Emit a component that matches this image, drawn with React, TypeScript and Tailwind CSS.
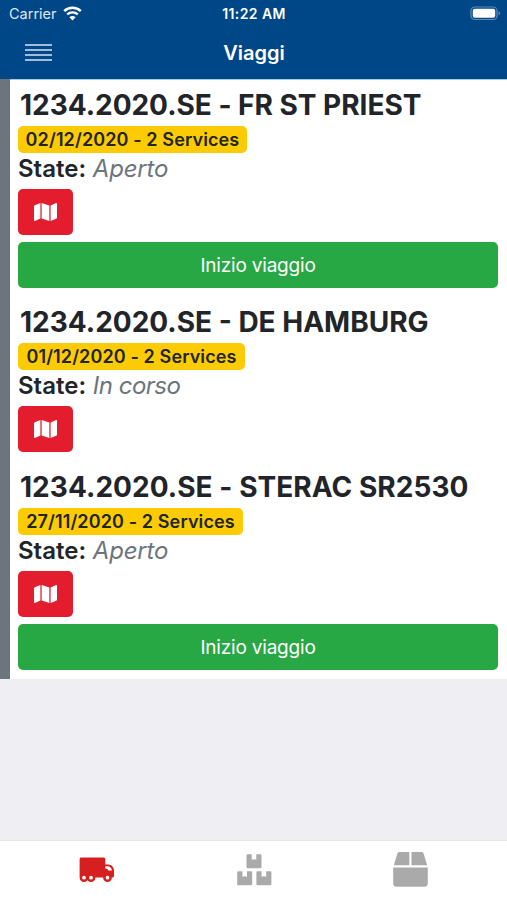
import React from "react";

type Trip = {
  title: string;
  titleSpacing: string;
  badge: string;
  badgeWidth: string;
  state: string;
  stateSpacing: string;
  canStart: boolean;
};

const trips: Trip[] = [
  { title: "1234.2020.SE - FR ST PRIEST", titleSpacing: "tracking-[-0.020px]", badge: "02/12/2020 - 2 Services", badgeWidth: "w-[229px]", state: "Aperto", stateSpacing: "tracking-[-0.200px]", canStart: true },
  { title: "1234.2020.SE - DE HAMBURG", titleSpacing: "tracking-[0px]", badge: "01/12/2020 - 2 Services", badgeWidth: "w-[227px]", state: "In corso", stateSpacing: "tracking-[-0.500px]", canStart: false },
  { title: "1234.2020.SE - STERAC SR2530", titleSpacing: "tracking-[0.050px]", badge: "27/11/2020 - 2 Services", badgeWidth: "w-[225px]", state: "Aperto", stateSpacing: "tracking-[-0.200px]", canStart: true },
];

function WifiIcon() {
  return (
    <svg width="19" height="15" viewBox="0 0 19 15" fill="none" stroke="#fff">
      <path d="M1.2 5.1a12 12 0 0 1 16.6 0" strokeWidth="2.5" />
      <path d="M4.2 8.4a7.7 7.7 0 0 1 10.6 0" strokeWidth="2.3" />
      <path d="M9.5 14.4 6.4 11.2a4.4 4.4 0 0 1 6.2 0Z" fill="#fff" stroke="none" />
    </svg>
  );
}

function BatteryIcon() {
  return (
    <svg width="31" height="15" viewBox="0 0 31 15">
      <rect x="1" y="1" width="26" height="12.5" rx="3.8" fill="none" stroke="#5f8ab8" strokeWidth="1.2" />
      <rect x="2.8" y="2.8" width="22.4" height="8.9" rx="2" fill="#fff" />
      <path d="M28.6 5.2c2 .7 2 3.4 0 4.1Z" fill="#5f8ab8" />
    </svg>
  );
}

function MapIcon() {
  return (
    <svg width="23" height="18" viewBox="0 32 576 448" preserveAspectRatio="none" fill="#fff">
      <path d="M0 117.660v346.320c0 11.320 11.430 19.060 21.940 14.860L160 416V32L20.120 87.950A32.006 32.006 0 0 0 0 117.660zM192 416l192 64V96L192 32v384zM554.060 33.160L416 96v384l139.880-55.950A31.996 31.996 0 0 0 576 394.340V48.020c0-11.320-11.430-19.060-21.940-14.860z" />
    </svg>
  );
}

function TruckIcon() {
  return (
    <svg width="36" height="26" viewBox="0 0 36 26">
      <path fill="#d5201f" d="M2.2.5h22.600a1.500 1.500 0 0 1 1.500 1.500v5.500h3.200c3.300 0 5.500 3.100 5.500 6.300v5.300c0 1-.5 1.400-1.400 1.400H1.900c-.9 0-1.300-.5-1.300-1.400V2C.6 1.100 1.200.5 2.200.5Z" />
      <path fill="#fff" d="M26.300 9.200h2.500c2.100 0 3.700 1.700 4.200 4.200h-3.700c-.5-1.400-1.500-1.800-3-1.900Z" />
      <g fill="#fff" stroke="#d5201f" strokeWidth="2.500">
        <circle cx="5" cy="20.700" r="3.100" />
        <circle cx="12" cy="20.700" r="3.100" />
        <circle cx="28.500" cy="20.700" r="3.100" />
      </g>
    </svg>
  );
}

function BoxesIcon() {
  const box = "M1.200 0h4v5.600l2.300-.6 2.300.6V0h4A1.200 1.200 0 0 1 15 1.200v11.600a1.200 1.200 0 0 1-1.200 1.200H1.200A1.200 1.200 0 0 1 0 12.800V1.200A1.200 1.200 0 0 1 1.200 0Z";
  return (
    <svg width="35" height="32" viewBox="0 0 35 32" fill="#aaa">
      <path d={box} transform="translate(9.500 .2)" />
      <path d={box} transform="translate(.2 17.200)" />
      <path d={box} transform="translate(19.400 17.200)" />
    </svg>
  );
}

function BoxIcon() {
  return (
    <svg width="35" height="35" viewBox="0 0 35 35" fill="#aaa">
      <path d="M6.700 0H16.300v13.200H.8L4.300 1.800C4.700.6 5.500 0 6.700 0Z" />
      <path d="M18.500 0h9.800c1.200 0 2 .6 2.400 1.800l3.500 11.400H18.500Z" />
      <path d="M.2 15.400h34.600v16c0 2-1.300 3.300-3.300 3.300h-28c-2 0-3.300-1.300-3.300-3.300Z" />
    </svg>
  );
}

function TripCard({ trip }: { trip: Trip }) {
  return (
    <article className={`flex flex-col items-start pl-2 pr-[9px] pt-[8px] ${trip.canStart ? "h-[217px]" : "h-[165px]"}`}>
      <h2 className={`h-[35px] whitespace-nowrap pl-[2px] text-[28px] font-[650] leading-[36px] text-[#212529] ${trip.titleSpacing}`}>{trip.title}</h2>
      <span className={`mt-1 flex h-[27px] items-center justify-center whitespace-nowrap rounded-[5px] bg-[#fccb04] text-[18px] font-semibold tracking-[0.120px] text-[#212529] ${trip.badgeWidth}`}>
        {trip.badge}
      </span>
      <p className="h-[30px] whitespace-nowrap text-[24px] leading-[31px] text-[#6c757d]">
        <span className="font-semibold text-[#212529]">State:</span> <em className={trip.stateSpacing}>{trip.state}</em>
      </p>
      <button className="mt-[6px] flex h-[46px] w-[55px] shrink-0 items-center justify-center rounded-[5px] bg-[#e31d2d]">
        <MapIcon />
      </button>
      {trip.canStart && (
        <button className="mt-[7px] h-[46px] w-full shrink-0 rounded-[5px] bg-[#28a745] pt-[3px] text-[19px] tracking-[-0.200px] text-white">Inizio viaggio</button>
      )}
    </article>
  );
}

export default function App() {
  return (
    <div className="flex h-[900px] w-[507px] flex-col overflow-hidden bg-[#eeeef3] font-['Inter',sans-serif]">
      <header className="h-[79px] shrink-0 bg-[#004787] text-white">
        <div className="grid h-[27px] grid-cols-3 items-center pl-[9px] pr-[6px]">
          <div className="flex items-center gap-[6px] text-[14.500px] text-[#dce8f4]">
            <span>Carrier</span>
            <WifiIcon />
          </div>
          <span className="whitespace-nowrap pr-[2px] text-center text-[14px] font-semibold tracking-[0.400px]">11:22 AM</span>
          <div className="flex justify-end"><BatteryIcon /></div>
        </div>
        <div className="grid h-[51px] grid-cols-3 items-center px-[25px]">
          <div className="flex h-[17px] w-[27px] flex-col justify-between">
            <span className="h-[2px] bg-[#a0bddb]" />
            <span className="h-[2px] bg-[#a0bddb]" />
            <span className="h-[2px] bg-[#a0bddb]" />
            <span className="h-[2px] bg-[#a0bddb]" />
          </div>
          <h1 className="pl-px text-center text-[20px] font-semibold">Viaggi</h1>
        </div>
      </header>
      <main className="h-[600px] shrink-0 border-l-[10px] border-[#6c757d] bg-white shadow-[inset_0_1px_0_#a5cbe3]">
        {trips.map((trip) => <TripCard key={trip.badge} trip={trip} />)}
      </main>
      <nav className="mt-auto grid h-[60px] shrink-0 grid-cols-[194px_119px_194px] border-t border-[#e6e6ea] bg-white">
        <div className="flex justify-center pt-[16px]"><TruckIcon /></div>
        <div className="flex justify-center pl-px pt-[13px]"><BoxesIcon /></div>
        <div className="flex justify-center pt-[11px]"><BoxIcon /></div>
      </nav>
    </div>
  );
}
